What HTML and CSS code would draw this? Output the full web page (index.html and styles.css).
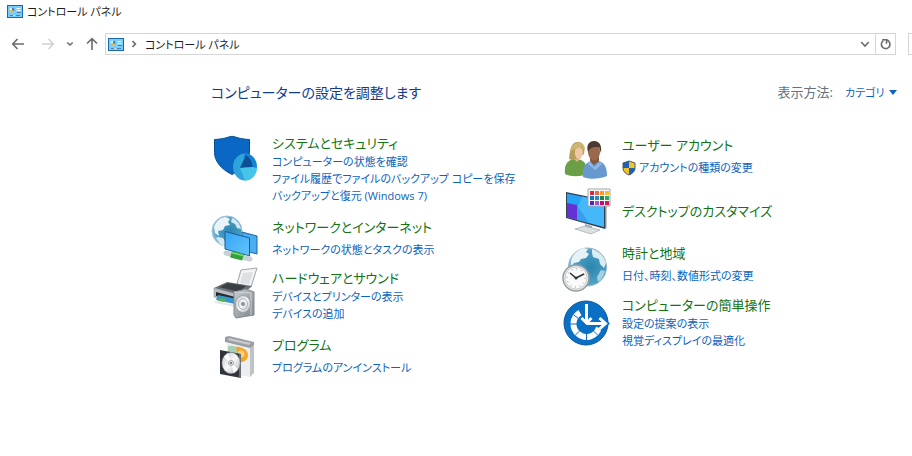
FILE: index.html
```html
<!DOCTYPE html>
<html lang="ja">
<head>
  <meta charset="UTF-8" />
  <meta name="viewport" content="width=device-width, initial-scale=1.0"/>
  <title>コントロール パネル</title>
  <link rel="stylesheet" href="styles.css">
</head>
<body>
  <svg class="defs" aria-hidden="true">
    <defs>
      <radialGradient id="globeFill" cx="0.6" cy="0.5" r="0.6">
        <stop offset="0" stop-color="#2b86ae"/>
        <stop offset="0.7" stop-color="#4b9fc4"/>
        <stop offset="1" stop-color="#88bfd8"/>
      </radialGradient>
      <linearGradient id="screenFill" x1="0" y1="0" x2="1" y2="1">
        <stop offset="0" stop-color="#36a4f5"/>
        <stop offset="1" stop-color="#62c4fb"/>
      </linearGradient>
      <linearGradient id="metalFill" x1="0" y1="0" x2="1" y2="1">
        <stop offset="0" stop-color="#c9cdd1"/>
        <stop offset="1" stop-color="#7d858b"/>
      </linearGradient>
      <linearGradient id="discFill" x1="0" y1="0" x2="1" y2="1">
        <stop offset="0" stop-color="#c4c8cb"/>
        <stop offset="0.5" stop-color="#f6f7f8"/>
        <stop offset="1" stop-color="#b2b7bb"/>
      </linearGradient>
      <symbol id="panelIcon" viewBox="0 0 16 13">
        <rect x="0.5" y="0.5" width="15" height="12" fill="#7accf8" stroke="#1b6aa8"/>
        <circle cx="5" cy="5" r="2.5" fill="#d8f0ff"/>
        <path d="M5 5V2.500A2.500 2.500 0 0 1 7 6.500z" fill="#2f7fc6"/>
        <path d="M5 5L7 6.500A2.500 2.500 0 0 1 2.500 5z" fill="#eab13c"/>
        <path d="M9.500 3.500h4M9.500 5.500h4" stroke="#fff"/>
        <path d="M10 7.500h4M3 10.500h3M9 10.500h4" stroke="#3a86c8"/>
        <path d="M6 10.500h2" stroke="#f4e08a"/>
      </symbol>
    </defs>
  </svg>

  <header class="titlebar">
    <svg class="panel-icon"><use href="#panelIcon"/></svg>
    <h1>コントロール パネル</h1>
  </header>

  <div class="toolbar">
    <div class="nav-buttons">
      <button type="button" aria-label="戻る"><svg width="14" height="14" viewBox="0 0 14 14"><path d="M13 7H2M6.500 2L1.700 7l4.800 5"/></svg></button>
      <button type="button" class="forward" aria-label="進む" disabled><svg width="14" height="14" viewBox="0 0 14 14"><path d="M1 7h11M7.500 2l4.800 5-4.800 5"/></svg></button>
      <button type="button" class="recent" aria-label="最近表示した場所"><svg width="8" height="8" viewBox="0 0 8 8"><path d="M1.300 2.500L4 5l2.700-2.500"/></svg></button>
      <button type="button" aria-label="上へ"><svg width="14" height="14" viewBox="0 0 14 14"><path d="M7 13V2M2 6.500L7 1.700l5 4.800"/></svg></button>
    </div>
    <div class="address">
      <svg class="panel-icon"><use href="#panelIcon"/></svg>
      <svg class="crumb-arrow" width="6" height="8" viewBox="0 0 6 8"><path d="M1.500 1.200L4.400 4 1.500 6.800"/></svg>
      <a href="#">コントロール パネル</a>
      <button type="button" class="history" aria-label="以前の場所"><svg width="10" height="8" viewBox="0 0 10 8"><path d="M1.200 2L5 6l3.800-4"/></svg></button>
      <button type="button" class="refresh" aria-label="更新"><svg width="12" height="12" viewBox="0 0 12 12"><path d="M3.300 2.700A4.300 4.300 0 1 0 8.700 3.200L7 1.800M2.200 1.800h4.300v4"/></svg></button>
    </div>
    <input type="search" class="search" aria-label="コントロール パネルの検索">
  </div>

  <main>
    <div class="heading">
      <h2>コンピューターの設定を調整します</h2>
      <label for="viewBy">表示方法:</label>
      <div class="view-by">
        <select id="viewBy">
          <option>カテゴリ</option>
        </select>
        <svg width="8" height="5" viewBox="0 0 8 5"><path d="M0 0h8L4 5z"/></svg>
      </div>
    </div>

    <div class="categories">
      <ul class="column system">
        <li class="category">
          <svg class="icon" viewBox="0 0 48 48">
            <path d="M21 3.300C16 4 14 6 3.500 6.500v13c0 8 6 16.500 17.500 22 11.500-5.500 17.500-14 17.500-22v-13C28 6 26 4 21 3.300z" fill="#0a67c4" stroke="#07508f"/>
            <ellipse cx="34" cy="34" rx="12" ry="13.500" fill="#2fa3dc"/>
            <path d="M34 34L33 20.500A12 13.500 0 0 1 46 34l-5 4z" fill="#1683d0"/>
            <path d="M35 22c4 3 6 6 6.500 12L29 35z" fill="#0b4f96"/>
            <path d="M29 35l12.500-1 4.500 1A12 13.500 0 0 1 34 47.500z" fill="#47c4ea"/>
          </svg>
          <div class="text">
            <h3><a href="#">システムとセキュリティ</a></h3>
            <a href="#">コンピューターの状態を確認</a>
            <a href="#">ファイル履歴でファイルのバックアップ コピーを保存</a>
            <a href="#">バックアップと復元 (Windows 7)</a>
          </div>
        </li>
        <li class="category single">
          <svg class="icon" viewBox="0 0 48 48">
            <circle cx="16" cy="16" r="15" fill="url(#globeFill)" stroke="#a2c6d8"/>
            <path d="M3 12C5 6 10 2 15 2l4 2-2 3 2 3-5 1-2 4-5 1 1 5-4-3z" fill="#e9f3f8"/>
            <path d="M21 3c5 2 8 6 9 11l-4-1-2-4-4-2zM7 22l5 1 3 5-2 3c-3-1-6-4-8-8z" fill="#d5e8f1"/>
            <path d="M31 17l15 4v18l-15-4z" fill="#4bacf1" stroke="#1e659f"/>
            <path d="M14 16.500L38.500 23v18L14 34z" fill="url(#screenFill)" stroke="#1d5c93"/>
            <path d="M26 37v4" stroke="#83939c" stroke-width="2"/>
            <path d="M15 38l24 6" stroke="#c7d0d3" stroke-width="5" stroke-linecap="round"/>
            <path d="M20 39.200l12 3" stroke="#32a13a" stroke-width="7"/>
            <path d="M20 37.500l12 3" stroke="#7fd47f" stroke-width="1.500"/>
          </svg>
          <div class="text">
            <h3><a href="#">ネットワークとインターネット</a></h3>
            <a href="#">ネットワークの状態とタスクの表示</a>
          </div>
        </li>
        <li class="category">
          <svg class="icon" viewBox="0 0 48 48">
            <path d="M30 2l16-2-6 19-14-3z" fill="#f1f3f4" stroke="#9ea4a8"/>
            <path d="M32 5l10-1-4 12-9-1z" fill="#dce0e2"/>
            <path d="M3 20l13-6 25 4-11 10z" fill="#6a7176"/>
            <path d="M8 19l9-4 18 3-7 6z" fill="#3a4044"/>
            <path d="M3 20l27 7v9L3 29z" fill="#b9bec1" stroke="#858b8f" stroke-width="0.500"/>
            <path d="M5 24l23 6v4L5 28z" fill="#26292c"/>
            <path d="M7 27l19 4-2 5-19-4z" fill="#3995cf"/>
            <path d="M9 30l6 1-2 3-6-1z" fill="#58b34d"/>
            <path d="M3 33l23 4-1 2-21-4z" fill="#e2e5e7"/>
            <path d="M23 24l12-3 8 3v23l-18 3-2-3z" fill="url(#metalFill)" stroke="#81898e"/>
            <path d="M23 24l17 1v22" fill="none" stroke="#cfd4d7"/>
            <ellipse cx="32" cy="36" rx="7.500" ry="8.500" fill="url(#discFill)" stroke="#9aa1a5"/>
            <ellipse cx="32" cy="36" rx="4.500" ry="5.500" fill="none" stroke="#b3b9bc"/>
            <circle cx="32" cy="36" r="2" fill="#8b9296"/>
          </svg>
          <div class="text">
            <h3><a href="#">ハードウェアとサウンド</a></h3>
            <a href="#">デバイスとプリンターの表示</a>
            <a href="#">デバイスの追加</a>
          </div>
        </li>
        <li class="category single">
          <svg class="icon" viewBox="0 0 48 48">
            <path d="M16 10l23 4v30l-23-4z" fill="#eceeef"/>
            <path d="M39 14l4-2v28l-4 4z" fill="#bfc3c6"/>
            <path d="M14 4l4-1 25 6v3l-4 3-25-6z" fill="#9a9ea2"/>
            <path d="M18 5l22 5-2 2-21-5z" fill="#c6cacc"/>
            <path d="M17 13c4-1 9 0 11 3l-3 6-8-3z" fill="#a8cfb2"/>
            <path d="M25 14c5-1 12 3 12 8s-5 8-9 7z" fill="#f4a629"/>
            <circle cx="30" cy="21" r="3.500" fill="#fad079"/>
            <path d="M9 17l21 4v24L9 41z" fill="#30353c"/>
            <path d="M28 21l2 0v24h-2z" fill="#676e75"/>
            <ellipse cx="20" cy="30" rx="9" ry="10.500" fill="url(#discFill)" stroke="#999fa4" stroke-width="0.500"/>
            <path d="M20 30l-7-6 4-4zM20 30l7 6-4 4z" fill="#fff"/>
            <circle cx="20" cy="30" r="2.500" fill="#e6e8ea" stroke="#a4a9ad"/>
            <circle cx="20" cy="30" r="1" fill="#595f66"/>
          </svg>
          <div class="text">
            <h3><a href="#">プログラム</a></h3>
            <a href="#">プログラムのアンインストール</a>
          </div>
        </li>
      </ul>

      <ul class="column personal">
        <li class="category single">
          <svg class="icon" viewBox="0 0 48 48">
            <path d="M4 41c-1-9 2-13 8-15l8 1c5 2 6 7 6 14-7 3-16 3-22 0z" fill="#6b9f46"/>
            <path d="M11 24l5 5 4-4v-4h-8z" fill="#dfb18b"/>
            <path d="M8 26c1-10 2-17 9-17 6 0 7 6 6 12l-5 4-7 2z" fill="#b59c5f"/>
            <path d="M15 14c4-1 7 1 7 6-1 4-3 6-5 6-3-1-4-6-2-12z" fill="#edc8a3"/>
            <path d="M13 16c3 0 6-1 7-3 2 2 3 4 3 5l1-3c-1-4-4-6-8-5-5 1-6 5-7 9z" fill="#cdb574"/>
            <path d="M22 44c-1-9 2-14 8-16h8c6 2 8 7 8 15-7 3-17 4-24 1z" fill="#6798cf"/>
            <path d="M29 28l4 4 5-4v-4h-9z" fill="#83583a"/>
            <ellipse cx="33" cy="19" rx="6" ry="8.500" fill="#98694a"/>
            <path d="M27 19c-2-7 1-11 6-11 6 0 8 5 7 12l-2-6c-4 0-8-1-11 5z" fill="#4a3a31"/>
            <path d="M29 29l4 5 6-5 2 2-7 6-7-6z" fill="#93b9e3"/>
          </svg>
          <div class="text">
            <h3><a href="#">ユーザー アカウント</a></h3>
            <a href="#" class="with-shield">
              <svg width="14" height="16" viewBox="0 0 14 16">
                <path d="M7 1L1 3v5c0 3 2 5.500 6 7z" fill="#1c62b5"/>
                <path d="M7 1l6 2v5H7z" fill="#f4c22b"/>
                <path d="M1 8h6v7C3 13.500 1 11 1 8z" fill="#f4c22b"/>
                <path d="M7 8h6c0 3-2 5.500-6 7z" fill="#1c62b5"/>
                <path d="M7 1L1 3v5c0 3 2 5.500 6 7 4-1.500 6-4 6-7V3z" fill="none" stroke="#4b5b70"/>
              </svg>
              アカウントの種類の変更
            </a>
          </div>
        </li>
        <li class="category">
          <svg class="icon" viewBox="0 0 48 48">
            <path d="M24 37l7 2v5h-7z" fill="#a8b0b5"/>
            <path d="M14 42l10-3 15 4-9 4z" fill="#dce0e3" stroke="#949ca1" stroke-width="0.600"/>
            <path d="M5 5l39 8v29L5 31z" fill="#34424f"/>
            <path d="M44 13l1.500-1v29L44 42z" fill="#85929c"/>
            <path d="M6 6.500l37 7.500v26L6 30z" fill="#23a4f5"/>
            <path d="M21 9.600L43 14v26L6 30l11-11z" fill="#62c8fc" opacity="0.550"/>
            <path d="M6 16l10 2v15L6 30z" fill="#6331d4"/>
            <path d="M16 18v14.700l12 3.300z" fill="#399cec"/>
            <path d="M27 2h22v17H27z" fill="#f8f8f8" stroke="#a5a5a5"/>
            <path d="M29 4h4v4h-4z" fill="#df263c"/><path d="M34 4h4v4h-4z" fill="#f06b45"/><path d="M39 4h4v4h-4z" fill="#f69a24"/><path d="M44 4h4v4h-4z" fill="#f6bd28"/>
            <path d="M29 9h4v4h-4z" fill="#1271c5"/><path d="M34 9h4v4h-4z" fill="#278bd0"/><path d="M39 9h4v4h-4z" fill="#26843c"/><path d="M44 9h4v4h-4z" fill="#28a770"/>
            <path d="M29 14h4v4h-4z" fill="#5722be"/><path d="M34 14h4v4h-4z" fill="#9758be"/><path d="M39 14h4v4h-4z" fill="#c40b7b"/><path d="M44 14h4v4h-4z" fill="#dd1751"/>
          </svg>
          <div class="text">
            <h3><a href="#">デスクトップのカスタマイズ</a></h3>
          </div>
        </li>
        <li class="category single">
          <svg class="icon" viewBox="0 0 48 48">
            <circle cx="26.500" cy="26" r="19" fill="url(#globeFill)" stroke="#8fb5c7"/>
            <path d="M10 20c1-6 6-11 12-13l5 1-2 3 3 2-3 4-5 1-2 3-5 1-3 3z" fill="#e7f2f7"/>
            <path d="M31 8c7 2 12 7 14 14l-2 5-4-4-1-5-6-2-1-4z" fill="#dcecf3"/>
            <path d="M40 29l4 1c-1 5-4 9-7 11l-1-5z" fill="#a9d0e1"/>
            <circle cx="15" cy="37" r="13" fill="#e8eaeb" stroke="#959ca0" stroke-width="1.500"/>
            <circle cx="15" cy="37" r="11" fill="#fafafa" stroke="#c9cdd0"/>
            <circle cx="15" cy="37" r="9" fill="none" stroke="#8b9195" stroke-dasharray="1 3.710"/>
            <path d="M9 32l6 5 8-4" fill="none" stroke="#303336" stroke-width="1.500"/>
            <circle cx="15" cy="37" r="1.500" fill="#303336"/>
          </svg>
          <div class="text">
            <h3><a href="#">時計と地域</a></h3>
            <a href="#">日付、時刻、数値形式の変更</a>
          </div>
        </li>
        <li class="category">
          <svg class="icon" viewBox="0 0 48 48">
            <circle cx="25" cy="28" r="22" fill="#0a70c5" stroke="#075796"/>
            <path d="M19 17.700A13 13 0 1 0 38 32.500" fill="none" stroke="#fff" stroke-width="6"/>
            <path d="M32.600 36.100l4.200 4.200M25.500 38v8M18.400 36.100l-4.200 4.200M16.500 29h-8M17.300 23.300l-4.900-3.500" stroke="#0a70c5"/>
            <path d="M25.500 10v17M20.500 23l5 5 5-5M26 28.500h17M38.500 23l6 5.500-6 5.500" fill="none" stroke="#0a70c5" stroke-width="6"/>
            <path d="M25.500 9v18M20.500 23l5 5 5-5M26 28.500h17M38.500 23l6 5.500-6 5.500" fill="none" stroke="#fff" stroke-width="3"/>
          </svg>
          <div class="text">
            <h3><a href="#">コンピューターの簡単操作</a></h3>
            <a href="#">設定の提案の表示</a>
            <a href="#">視覚ディスプレイの最適化</a>
          </div>
        </li>
      </ul>
    </div>
  </main>
</body>
</html>
```
FILE: styles.css
```css
:root {
  --link: #0d62bd;
  --title: #127312;
  --heading: #113b91;
  --text: #1c1c1c;
  --border: #d6d6d6;
}

* {
  box-sizing: border-box;
}

body {
  margin: 0;
  background: #fff;
  color: var(--text);
  font-family: "Open Sans", "Noto Sans CJK JP", sans-serif;
  font-size: 11px;
  line-height: 17px;
  font-feature-settings: "palt";
}

a {
  color: var(--link);
  text-decoration: none;
}

a:hover {
  text-decoration: underline;
}

h1,
h2,
h3,
ul {
  margin: 0;
  padding: 0;
  font-weight: normal;
  list-style: none;
}

button {
  display: flex;
  align-items: center;
  justify-content: center;
  padding: 0;
  border: none;
  background: none;
  cursor: pointer;
}

.defs {
  position: absolute;
  width: 0;
  height: 0;
}

.panel-icon {
  flex: none;
  width: 16px;
  height: 13px;
}

/* title bar */
.titlebar {
  display: flex;
  align-items: center;
  gap: 4px;
  height: 23px;
  padding-left: 7px;
}

.titlebar h1 {
  font-size: 11px;
}

/* navigation and address bar */
.toolbar {
  display: flex;
  align-items: center;
  margin-top: 10px;
  padding-left: 11px;
}

.nav-buttons {
  display: flex;
  align-items: center;
  gap: 11px;
  margin-right: 6px;
}

.nav-buttons button:first-child {
  margin-right: 5px;
}

.toolbar button path,
.crumb-arrow path {
  fill: none;
  stroke: #6b6b6b;
  stroke-width: 1.6;
}

.toolbar .forward path {
  stroke: #d2d2d2;
}

.address {
  display: flex;
  flex: 1;
  align-items: center;
  height: 22px;
  padding-left: 2px;
  border: 1px solid var(--border);
}

.address a {
  flex: 1;
  color: var(--text);
}

.crumb-arrow {
  margin: 0 8px 0 7px;
}

.history,
.refresh {
  width: 20px;
  height: 20px;
}

.refresh {
  border-left: 1px solid var(--border);
}

.search {
  width: 4px;
  height: 22px;
  margin-left: 12px;
  padding: 0;
  border: 1px solid var(--border);
  border-right: none;
}

/* content */
main {
  padding: 25px 15px 40px 211px;
}

.heading {
  display: flex;
  align-items: center;
  height: 24px;
}

.heading h2 {
  flex: 1;
  color: var(--heading);
  font-size: 14px;
}

.heading label {
  margin-right: 12px;
  color: #66707c;
  font-size: 13px;
}

.view-by {
  display: flex;
  align-items: center;
  gap: 4px;
}

.view-by select {
  padding: 0;
  border: none;
  appearance: none;
  background: none;
  color: var(--link);
  font: inherit;
  font-feature-settings: inherit;
}

.view-by path {
  fill: var(--link);
}

.categories {
  display: grid;
  grid-template-columns: 350px 1fr;
  margin-top: 29px;
}

.column {
  display: flex;
  flex-direction: column;
  gap: 5px;
}

.personal {
  gap: 6px;
}

.category {
  display: flex;
  gap: 13px;
  min-height: 48px;
}

.system .single {
  padding-top: 6px;
}

.icon {
  flex: none;
  width: 48px;
  height: 48px;
  overflow: visible;
}

.text {
  display: flex;
  flex-direction: column;
  align-items: flex-start;
  justify-content: center;
}

.text h3 {
  font-size: 13px;
  line-height: 20px;
}

.text h3 a {
  color: var(--title);
}

.single .text {
  justify-content: flex-start;
  padding-top: 2px;
}

.single h3 {
  margin-bottom: 4px;
}

.with-shield {
  display: flex;
  align-items: center;
  gap: 3px;
}
```
